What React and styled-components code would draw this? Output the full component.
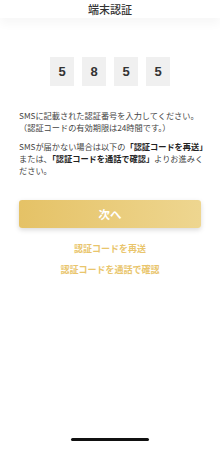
import styled, { createGlobalStyle } from "styled-components";

const GlobalStyle = createGlobalStyle`
  html, body {
    margin: 0;
    padding: 0;
    background: #fff;
  }
  body {
    font-family: "Noto Sans CJK JP", "Noto Sans", sans-serif;
  }
`;

const Page = styled.div`
  display: flex;
  flex-direction: column;
  height: 455px;
  overflow: hidden;
`;

const Header = styled.header`
  height: 18px;
  display: flex;
  align-items: center;
  justify-content: center;
  box-shadow: 0 6px 10px rgba(0, 0, 0, 0.035);
`;

const Title = styled.h1`
  margin: 0;
  font-size: 11px;
  font-weight: 500;
  color: #333;
  line-height: 1;
`;

const CodeRow = styled.div`
  display: flex;
  justify-content: center;
  gap: 8px;
  margin-top: 39px;
`;

const CodeBox = styled.div`
  width: 24px;
  height: 29px;
  background: #f0f0f0;
  display: flex;
  align-items: center;
  justify-content: center;
  font-family: "Liberation Sans", Arial, sans-serif;
  font-size: 13px;
  font-weight: 700;
  color: #333;
`;

const Notice = styled.div`
  margin-top: 23px;
  padding: 0 19px;
  font-size: 8.2px;
  line-height: 12px;
  color: #444;
  white-space: nowrap;
`;

const Para = styled.p`
  margin: 0 0 7px;
  &:last-child {
    margin-bottom: 0;
  }
`;

const Strong = styled.b`
  font-weight: 700;
  color: #222;
`;

const NextButton = styled.button`
  margin: 24px 19px 0;
  height: 28px;
  border: none;
  border-radius: 3px;
  background: linear-gradient(90deg, #e5c266, #eed690);
  box-shadow: 0 2px 5px rgba(0, 0, 0, 0.15);
  color: #fff;
  font-family: inherit;
  font-size: 11.5px;
  font-weight: 700;
`;

const LinkText = styled.a`
  display: block;
  text-align: center;
  margin-top: ${({ $gap }) => $gap}px;
  font-size: 9px;
  line-height: 12px;
  font-weight: 700;
  color: #e9c56c;
`;

const HomeBar = styled.div`
  margin: auto auto 14px;
  width: 78px;
  height: 3px;
  border-radius: 2px;
  background: #111;
`;

const digits = ["5", "8", "5", "5"];

export default function App() {
  return (
    <Page>
      <GlobalStyle />
      <Header>
        <Title>端末認証</Title>
      </Header>

      <CodeRow>
        {digits.map((d, i) => (
          <CodeBox key={i}>{d}</CodeBox>
        ))}
      </CodeRow>

      <Notice>
        <Para>
          SMSに記載された認証番号を入力してください。
          <br />
          （認証コードの有効期限は24時間です。）
        </Para>
        <Para>
          SMSが届かない場合は以下の<Strong>「認証コードを再送」</Strong>
          <br />
          または、<Strong>「認証コードを通話で確認」</Strong>よりお進みく
          <br />
          ださい。
        </Para>
      </Notice>

      <NextButton>次へ</NextButton>

      <LinkText $gap={15}>認証コードを再送</LinkText>
      <LinkText $gap={9}>認証コードを通話で確認</LinkText>

      <HomeBar />
    </Page>
  );
}
